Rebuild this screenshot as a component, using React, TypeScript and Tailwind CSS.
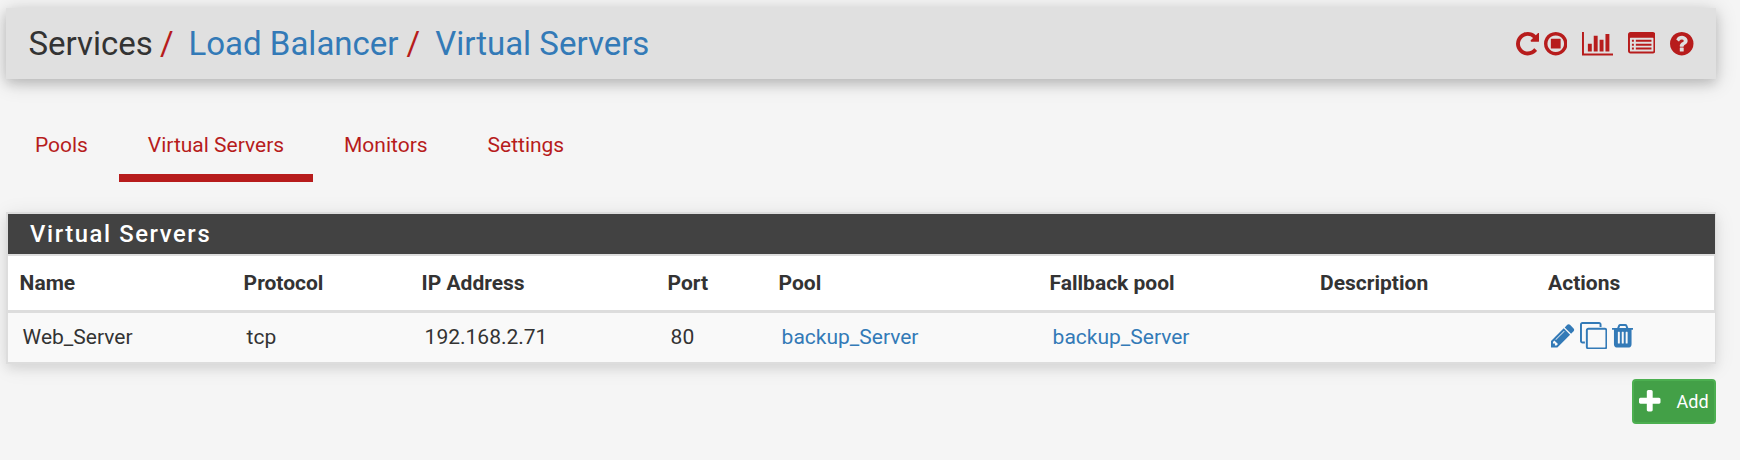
type IconProps = { path: string; box: string; className: string };

function Icon({ path, box, className }: IconProps) {
  return (
    <svg viewBox={box} className={`block h-[27.4px] shrink-0 fill-current ${className}`} aria-hidden="true">
      <path d={path} />
    </svg>
  );
}

const REPEAT =
  "M1664 256v448q0 26-19 45t-45 19h-448q-42 0-59-40-17-39 14-69l138-138q-148-137-349-137-104 0-198.5 40.5t-163.5 109.5-109.5 163.5-40.5 198.5 40.5 198.5 109.5 163.5 163.5 109.5 198.5 40.5q119 0 225-52t179-147q7-10 23-12 15 0 25 9l137 138q9 8 9.5 20.5t-7.5 22.5q-109 132-264 204.5t-327 72.5q-156 0-298-61t-245-164-164-245-61-298 61-298 164-245 245-164 298-61q147 0 284.5 55.5t244.5 156.5l130-129q29-31 70-14 39 17 39 59z";
const STOP =
  "M1216 608v576q0 14-9 23t-23 9h-576q-14 0-23-9t-9-23v-576q0-14 9-23t23-9h576q14 0 23 9t9 23zM896 128q209 0 385.5 103t279.5 279.5 103 385.5-103 385.5-279.5 279.5-385.5 103-385.5-103-279.5-279.5-103-385.5 103-385.5 279.5-279.5 385.5-103zM896 1440q148 0 273-73t198-198 73-273-73-273-198-198-273-73-273 73-198 198-73 273 73 273 198 198 273 73z";
const CHART =
  "M640 896v512h-256v-512h256zm384-512v1024h-256v-1024h256zm1024 1152v128h-2048v-1536h128v1408h1920zm-640-896v768h-256v-768h256zm384-384v1152h-256v-1152h256z";
const LIST =
  "M256 1152h128v128h-128zM256 896h128v128h-128zM256 640h128v128h-128zM512 1152h1024v128h-1024zM512 896h1024v128h-1024zM512 640h1024v128h-1024zM1664 1376v-832q0-13-9.5-22.5t-22.5-9.5h-1472q-13 0-22.5 9.5t-9.5 22.5v832q0 13 9.5 22.5t22.5 9.5h1472q13 0 22.5-9.5t9.5-22.5zm128-1088v1088q0 66-47 113t-113 47h-1472q-66 0-113-47t-47-113v-1088q0-66 47-113t113-47h1472q66 0 113 47t47 113z";
const HELP =
  "M1024 1376v-192q0-14-9-23t-23-9h-192q-14 0-23 9t-9 23v192q0 14 9 23t23 9h192q14 0 23-9t9-23zm256-672q0-88-55.5-163t-138.5-116-170-41q-243 0-371 213-15 24 8 42l132 100q7 6 19 6 16 0 25-12 53-68 86-92 34-24 86-24 48 0 85.5 26t37.5 59q0 38-20 61t-68 45q-63 28-115.5 86.5t-52.5 125.5v36q0 14 9 23t23 9h192q14 0 23-9t9-23q0-19 21.5-49.5t54.5-49.5q32-18 49-28.5t46-35 44.5-48 28-60.5 12.5-81zm384 192q0 209-103 385.5t-279.5 279.5-385.5 103-385.5-103-279.5-279.5-103-385.5 103-385.5 279.5-279.5 385.5-103 385.5 103 279.5 279.5 103 385.5z";
const PENCIL =
  "M491 1536l91-91-235-235-91 91v107h128v128h107zm523-928q0-22-22-22-10 0-17 7l-542 542q-7 7-7 17 0 22 22 22 10 0 17-7l542-542q7-7 7-17zm-54-192l416 416-832 832h-416v-416zm683 96q0 53-37 90l-166 166-416-416 166-165q36-38 90-38 53 0 91 38l235 234q37 39 37 91z";
const CLONE =
  "M1664 1632v-1088q0-13-9.5-22.5t-22.5-9.5h-1088q-13 0-22.5 9.5t-9.5 22.5v1088q0 13 9.5 22.5t22.5 9.5h1088q13 0 22.5-9.5t9.5-22.5zm128-1088v1088q0 66-47 113t-113 47h-1088q-66 0-113-47t-47-113v-1088q0-66 47-113t113-47h1088q66 0 113 47t47 113zm-384-384v160h-128v-160q0-13-9.5-22.5t-22.5-9.5h-1088q-13 0-22.5 9.5t-9.5 22.5v1088q0 13 9.5 22.5t22.5 9.5h160v128h-160q-66 0-113-47t-47-113v-1088q0-66 47-113t113-47h1088q66 0 113 47t47 113z";
const TRASH =
  "M704 1376v-704q0-14-9-23t-23-9h-64q-14 0-23 9t-9 23v704q0 14 9 23t23 9h64q14 0 23-9t9-23zm256 0v-704q0-14-9-23t-23-9h-64q-14 0-23 9t-9 23v704q0 14 9 23t23 9h64q14 0 23-9t9-23zm256 0v-704q0-14-9-23t-23-9h-64q-14 0-23 9t-9 23v704q0 14 9 23t23 9h64q14 0 23-9t9-23zm-544-992h448l-48-117q-7-9-17-11h-317q-10 2-17 11zm928 32v64q0 14-9 23t-23 9h-96v948q0 83-47 143.5t-113 60.5h-832q-66 0-113-58.5t-47-141.5v-952h-96q-14 0-23-9t-9-23v-64q0-14 9-23t23-9h309l70-167q15-37 54-63t79-26h320q40 0 79 26t54 63l70 167h309q14 0 23 9t9 23z";
const PLUS =
  "M1600 736v192q0 40-28 68t-68 28h-416v416q0 40-28 68t-68 28h-192q-40 0-68-28t-28-68v-416h-416q-40 0-68-28t-28-68v-192q0-40 28-68t68-28h416v-416q0-40 28-68t68-28h192q40 0 68 28t28 68v416h416q40 0 68 28t28 68z";

const ROW =
  "grid grid-cols-[224px_178px_246px_111px_271px_270.5px_228px_1fr] items-center";

const HEADINGS = ["Name", "Protocol", "IP Address", "Port", "Pool", "Fallback pool", "Description", "Actions"];
const TABS = ["Pools", "Virtual Servers", "Monitors", "Settings"];

export default function App() {
  return (
    <div className="h-[460px] w-[1740px] overflow-hidden bg-[#f5f5f5] pt-2 pr-6 pl-1.5 font-[Roboto,sans-serif] text-[21px] leading-[29px] text-[#333]">
      <header className="flex h-[71px] items-center justify-between bg-[#e0e0e0] pr-[22.5px] pl-[22.5px] shadow-[0_3px_20px_rgba(0,0,0,0.19),0_5px_10px_rgba(0,0,0,0.12)]">
        <h1 className="flex text-[33px] leading-[36px]">
          <span>Services</span>
          <span className="ml-[7px] text-[#b71c1c]">/</span>
          <a className="ml-[15px] text-[#337ab7]">Load Balancer</a>
          <span className="ml-[8px] text-[#b71c1c]">/</span>
          <a className="ml-[15px] text-[#337ab7]">Virtual Servers</a>
        </h1>
        <nav className="flex text-[#b71c1c]">
          <Icon path={REPEAT} box="128 0 1536 1792" className="w-[23.5px]" />
          <Icon path={STOP} box="128 0 1536 1792" className="ml-[4.7px] w-[23.5px]" />
          <Icon path={CHART} box="0 0 2048 1792" className="ml-[14.7px] w-[31.3px]" />
          <Icon path={LIST} box="0 0 1792 1792" className="ml-[14.5px] w-[27.4px]" />
          <Icon path={HELP} box="128 0 1536 1792" className="ml-[14.7px] w-[23.5px]" />
        </nav>
      </header>

      <nav className="mt-[44px] flex h-[59px] gap-[2.5px] text-[#b71c1c]">
        {TABS.map((tab) => (
          <a
            key={tab}
            className={`flex h-[59px] flex-col justify-start border-b-8 pr-[28.5px] pl-[28.9px] pt-2 ${tab === "Virtual Servers" ? "border-[#b71c1c]" : "border-transparent"}`}
          >
            {tab}
          </a>
        ))}
      </nav>

      <section className="mt-[30px] h-[152px] w-[1710px] border-2 border-[#ddd] bg-white shadow-[0_3px_20px_rgba(0,0,0,0.09),0_5px_10px_rgba(0,0,0,0.07)]">
        <h2 className="-mr-px flex h-10 items-center bg-[#424242] pl-[22px] text-[23.8px] font-medium tracking-[1.6px] text-white">
          Virtual Servers
        </h2>
        <div className={`${ROW} h-[59px] border-t-2 border-b-3 border-[#ddd] pl-[11.6px] font-bold`}>
          {HEADINGS.map((heading) => (
            <span key={heading}>{heading}</span>
          ))}
        </div>
        <div className={`${ROW} -mr-px h-[49px] bg-[#f9f9f9] pl-[14.6px]`}>
          <span>Web_Server</span>
          <span>tcp</span>
          <span>192.168.2.71</span>
          <span>80</span>
          <a className="text-[#337ab7]">backup_Server</a>
          <a className="text-[#337ab7]">backup_Server</a>
          <span />
          <span className="mb-1 flex text-[#337ab7]">
            <Icon path={PENCIL} box="128 0 1536 1792" className="w-[23.5px]" />
            <Icon path={CLONE} box="0 0 1792 1792" className="ml-[5px] w-[27.4px]" />
            <Icon path={TRASH} box="192 0 1408 1792" className="ml-[5px] w-[21.5px]" />
          </span>
        </div>
      </section>

      <div className="mt-[15px] flex w-[1710px] justify-end">
        <button className="flex h-[45px] w-[84px] items-center rounded-[4px] border-2 border-[#4caf50] bg-[#43a047] pl-[5px] text-[18px] text-white">
          <Icon path={PLUS} box="192 0 1408 1792" className="w-[21.5px]" />
          <span className="ml-4">Add</span>
        </button>
      </div>
    </div>
  );
}
